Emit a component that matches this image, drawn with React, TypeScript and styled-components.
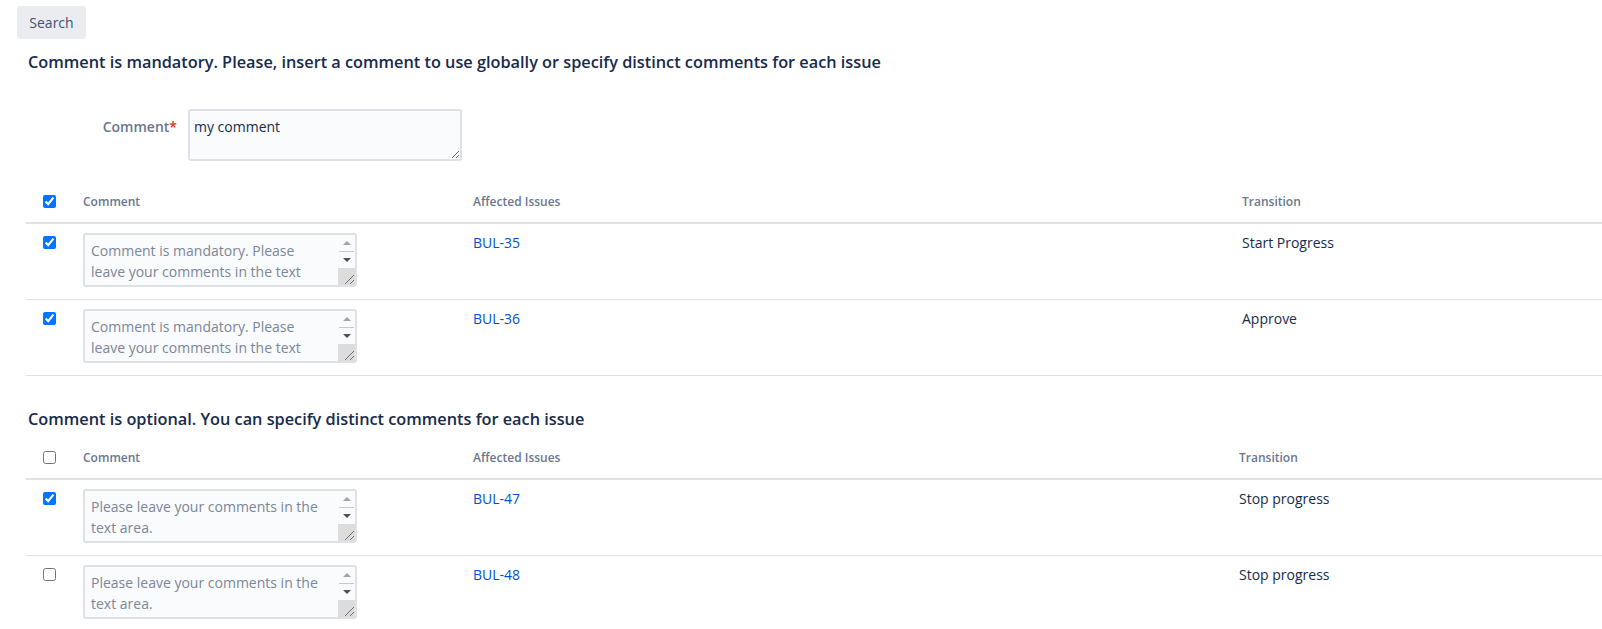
import styled, { createGlobalStyle } from 'styled-components';

const GlobalStyle = createGlobalStyle`
  body {
    margin: 0;
    background: #ffffff;
    font-family: "Open Sans", "Noto Sans", sans-serif;
    color: #172b4d;
  }
`;

const Page = styled.div`
  padding: 6px 0 0 0;
`;

const SearchButton = styled.button`
  margin-left: 17px;
  height: 33px;
  width: 69px;
  border: none;
  border-radius: 3px;
  background: #ebecf0;
  color: #42526e;
  font-family: inherit;
  font-size: 14px;
  cursor: pointer;
`;

const Heading = styled.h4<{ $top: number; $bottom: number }>`
  margin: ${p => p.$top}px 0 ${p => p.$bottom}px 0;
  padding-left: 28px;
  font-size: 16.3px;
  line-height: 20px;
  font-weight: 600;
  color: #172b4d;
`;

const GlobalRow = styled.div`
  display: flex;
  align-items: flex-start;
  gap: 11px;
`;

const Label = styled.label`
  width: 177px;
  text-align: right;
  padding-top: 8px;
  font-size: 14px;
  line-height: 20px;
  font-weight: 600;
  color: #6b778c;
`;

const Required = styled.span`
  color: #de350b;
`;

const TextArea = styled.textarea<{ $height: number }>`
  box-sizing: border-box;
  width: 274px;
  height: ${p => p.$height}px;
  margin: 0;
  padding: 5px 6px 3px 4px;
  border: 2px solid #dfe1e6;
  border-radius: 3px;
  background: #fafbfc;
  color: #172b4d;
  font-family: inherit;
  font-size: 14px;
  line-height: 21px;
  display: block;
`;

/* per-issue comment box: textarea plus a drawn scrollbar rail */
const CommentBox = styled.div`
  position: relative;
  width: 274px;
`;

const RowTextArea = styled(TextArea)`
  padding: 5px 26px 3px 6px;
  color: #7a869a;
  overflow: hidden;
  resize: none;
`;

const Rail = styled.div`
  position: absolute;
  top: 2px;
  right: 2px;
  bottom: 2px;
  width: 17px;
  display: flex;
  flex-direction: column;
  background: #fafbfc;
  pointer-events: none;
`;

const ArrowButton = styled.div`
  height: 16px;
  display: flex;
  align-items: center;
  justify-content: center;
`;

const Arrow = styled.span<{ $down?: boolean }>`
  width: 0;
  height: 0;
  border-left: 4px solid transparent;
  border-right: 4px solid transparent;
  ${p =>
    p.$down
      ? 'border-top: 4px solid #505050;'
      : 'border-bottom: 4px solid #a3a3a3;'}
`;

const Track = styled.div`
  flex: 1;
  margin: 0 1px;
  background: #c8c8c8;
`;

const Corner = styled.div`
  height: 17px;
  background: #dcdcdc;
  display: flex;
  align-items: flex-end;
  justify-content: flex-end;
`;

const Table = styled.table<{ $top: number }>`
  margin: ${p => p.$top}px 0 0 26px;
  width: calc(100% - 26px);
  border-collapse: collapse;
  table-layout: fixed;
`;

const HeadCell = styled.th`
  text-align: left;
  vertical-align: top;
  padding: 10px 10px 13px 10px;
  font-size: 12px;
  line-height: 14px;
  font-weight: 600;
  color: #6b778c;
  border-bottom: 2px solid #dfe1e6;
`;

const Cell = styled.td`
  vertical-align: top;
  padding: 9px 10px 12px 10px;
  font-size: 14px;
  line-height: 20px;
  color: #172b4d;
  border-bottom: 1px solid #dfe1e6;
`;

const CheckCell = styled(Cell)`
  padding-left: 17px;
  padding-top: 12px;
`;

const CheckHead = styled(HeadCell)`
  padding-left: 17px;
`;

const Check = styled.input`
  display: block;
  margin: 0;
  width: 13px;
  height: 13px;
`;

const IssueLink = styled.a`
  color: #0052cc;
  text-decoration: none;
`;

type Row = { checked: boolean; key: string; transition: string };

const mandatoryRows: Row[] = [
  { checked: true, key: 'BUL-35', transition: 'Start Progress' },
  { checked: true, key: 'BUL-36', transition: 'Approve' },
];

const optionalRows: Row[] = [
  { checked: true, key: 'BUL-47', transition: 'Stop progress' },
  { checked: false, key: 'BUL-48', transition: 'Stop progress' },
];

function Grip() {
  return (
    <svg width="12" height="12" viewBox="0 0 12 12">
      <path d="M2 11 L11 2 M7 11 L11 7" stroke="#6f6f6f" strokeWidth="1" fill="none" />
    </svg>
  );
}

function IssueComment({ text }: { text: string }) {
  return (
    <CommentBox>
      <RowTextArea $height={54} defaultValue={text} />
      <Rail>
        <ArrowButton>
          <Arrow />
        </ArrowButton>
        <Track />
        <ArrowButton>
          <Arrow $down />
        </ArrowButton>
        <Corner>
          <Grip />
        </Corner>
      </Rail>
    </CommentBox>
  );
}

function IssueTable({
  rows,
  allChecked,
  text,
  top,
  transitionCol,
}: {
  rows: Row[];
  allChecked: boolean;
  text: string;
  top: number;
  transitionCol: number;
}) {
  return (
    <Table $top={top}>
      <colgroup>
        <col style={{ width: 47 }} />
        <col style={{ width: 390 }} />
        <col style={{ width: transitionCol - 463 }} />
        <col />
      </colgroup>
      <thead>
        <tr>
          <CheckHead>
            <Check type="checkbox" defaultChecked={allChecked} />
          </CheckHead>
          <HeadCell>Comment</HeadCell>
          <HeadCell>Affected Issues</HeadCell>
          <HeadCell>Transition</HeadCell>
        </tr>
      </thead>
      <tbody>
        {rows.map(r => (
          <tr key={r.key}>
            <CheckCell>
              <Check type="checkbox" defaultChecked={r.checked} />
            </CheckCell>
            <Cell>
              <IssueComment text={text} />
            </Cell>
            <Cell>
              <IssueLink href="#">{r.key}</IssueLink>
            </Cell>
            <Cell>{r.transition}</Cell>
          </tr>
        ))}
      </tbody>
    </Table>
  );
}

function App() {
  return (
    <Page>
      <GlobalStyle />
      <SearchButton>Search</SearchButton>
      <Heading $top={13} $bottom={37}>
        Comment is mandatory. Please, insert a comment to use globally or specify distinct comments for each issue
      </Heading>
      <GlobalRow>
        <Label>
          Comment<Required>*</Required>
        </Label>
        <TextArea $height={52} defaultValue="my comment" />
      </GlobalRow>
      <IssueTable
        rows={mandatoryRows}
        allChecked
        top={24}
        transitionCol={1232}
        text="Comment is mandatory. Please leave your comments in the text area."
      />
      <Heading $top={33} $bottom={12}>
        Comment is optional. You can specify distinct comments for each issue
      </Heading>
      <IssueTable
        rows={optionalRows}
        allChecked={false}
        top={0}
        transitionCol={1229}
        text="Please leave your comments in the text area."
      />
    </Page>
  );
}

export default App;
